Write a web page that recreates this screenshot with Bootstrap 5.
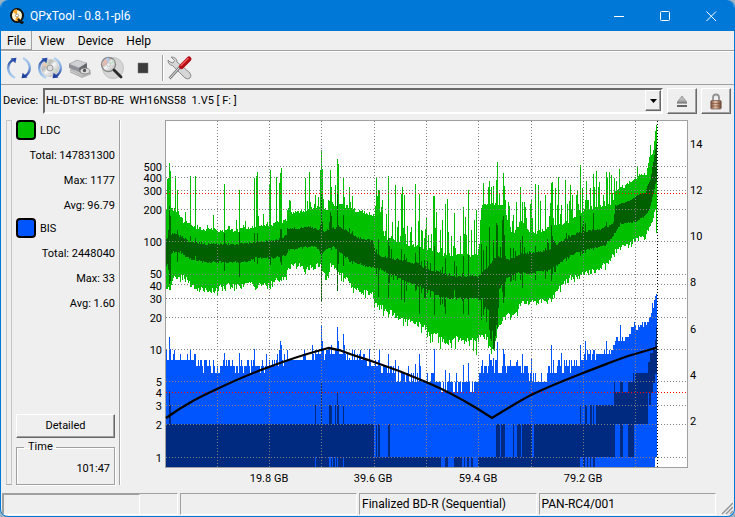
<!DOCTYPE html>
<html lang="en">
<head>
<meta charset="utf-8">
<meta name="viewport" content="width=device-width, initial-scale=1">
<title>QPxTool - 0.8.1-pl6</title>
<link href="https://cdn.jsdelivr.net/npm/bootstrap@5.3.0/dist/css/bootstrap.min.css" rel="stylesheet">
<style>
:root{--face:#efefef;--accent:#0078d7;--edge:#a0a0a0;--shade:#696969}
body{background:#9fb4c2;font:11px/14px Roboto,"Liberation Sans",sans-serif;color:#000}
.app-window{background:var(--face);border:1px solid var(--accent);border-top:0;border-radius:8px;overflow:hidden}
.title-strip{background:var(--accent);height:31px;color:#fff;font:12px/16px Roboto,"Open Sans",sans-serif}
.title-strip button{background:none;border:0;color:#fff;width:46px;height:31px;padding:0}
.menu-strip{height:20px;border-bottom:1px solid var(--edge);font:12px/16px Roboto,"Open Sans",sans-serif}
.menu-strip a{color:#000;text-decoration:none;padding:2px 6px 1px;margin-right:1px}
.menu-strip a.current{border-right:1px solid var(--edge);border-bottom:1px solid var(--edge);padding-right:5px}
.tool-strip{height:34px;padding-left:2px;border-top:1px solid #fff;border-bottom:1px solid var(--edge)}
.tool-strip button{background:none;border:0;padding:0;width:31px;height:30px}
.tool-sep{width:2px;height:26px;border-left:1px solid var(--edge);border-right:1px solid #fff}
.device-row{padding:3px 3px 1px 2px}
.device-row label{width:40px}
.pick{border:2px solid;border-color:var(--shade) #fff #fff var(--shade);height:26px}
.pick select{appearance:none;background:var(--face);border:0;border-radius:0;font:inherit;color:#000;padding:0 18px 0 1px;outline:0;white-space:pre}
.pick-arrow{right:0;top:0;width:16px;height:21px;pointer-events:none}
.raised{background:var(--face);border:1px solid;border-color:#fff var(--shade) var(--shade) #fff;box-shadow:inset -1px -1px 0 var(--edge);color:#000;padding:0}
.sq{width:30px;height:26px}
.handle{width:6px;border:1px solid #c6c6c6;border-bottom-color:#a8a8a8}
.side{width:103px}
.side-wrap{padding:5px 0 6px 5px}
.side-edge{width:2px;border-left:1px solid var(--edge);border-right:1px solid #fff}
.swatch{width:20px;height:20px;border:2px solid #000;border-radius:4px}
.swatch.ldc{background:#00c000}.swatch.bis{background:#0055ff}
.series-head{height:23px}
.stat{height:25px;line-height:25px;text-align:right}
.detail-btn{height:24px;margin-bottom:2px}
.time-box{border:1px solid var(--edge);box-shadow:1px 1px 0 #fff,inset 1px 1px 0 #fff;padding:0 4px 8px;min-width:0}
.time-box legend{float:none;width:auto;font:inherit;margin:0 0 0 3px;padding:0 3px 0 4px}
.plot text{font:11px Roboto,"Liberation Sans",sans-serif}
.status-strip{padding:2px 1px 1px;gap:2px;font:12px/20px Roboto,"Open Sans",sans-serif}
.pane{flex:1 1 0;height:22px;border:1px solid;border-color:var(--edge) #fff #fff var(--edge);padding-left:2px;white-space:nowrap;overflow:hidden}
.meter{width:79%;height:21px;border:1px solid;border-color:var(--edge) #fff #fff var(--edge)}
.grip{width:15px}
</style>
</head>
<body>
<div class="app-window min-vh-100 d-flex flex-column">
  <header class="title-strip d-flex align-items-center ps-2">
    <svg width="17" height="18" viewBox="0 0 17 18" class="me-1" aria-hidden="true"><ellipse cx="8" cy="8.500" rx="6" ry="6.500" fill="#fff4d0" stroke="#111" stroke-width="2"/><path d="M8 8L3.600 4.500Q5.500 2 8 2.300ZM8 9L12 13Q9 15 6 13.500Z" fill="#f7a325"/><circle cx="8" cy="8.500" r="1.500" fill="#fff" stroke="#777" stroke-width=".7"/><path d="M9 12l3.500 4 2-1" fill="none" stroke="#111" stroke-width="2"/></svg>
    <span class="flex-grow-1">QPxTool - 0.8.1-pl6</span>
    <button aria-label="Minimize"><svg width="11" height="11"><path d="M0 5.500h10" stroke="#fff"/></svg></button>
    <button aria-label="Maximize"><svg width="11" height="11"><rect x=".5" y=".5" width="9" height="9" rx="1" fill="none" stroke="#fff"/></svg></button>
    <button aria-label="Close"><svg width="11" height="11"><path d="M.5.500l9.500 9.500M10 .500L.5 10" stroke="#fff"/></svg></button>
  </header>
  <nav class="menu-strip d-flex"><a href="#" class="current">File</a><a href="#">View</a><a href="#">Device</a><a href="#">Help</a></nav>
  <div class="tool-strip d-flex align-items-center" role="toolbar">
    <svg width="0" height="0" class="position-absolute" aria-hidden="true"><defs>
      <linearGradient id="arc" x2="0" y2="1"><stop stop-color="#b5d2f0"/><stop offset=".5" stop-color="#7fa8dd"/><stop offset="1" stop-color="#1f3f9c"/></linearGradient>
      <linearGradient id="arc2" x2="0" y2="1"><stop stop-color="#1f3f9c"/><stop offset=".5" stop-color="#7fa8dd"/><stop offset="1" stop-color="#b5d2f0"/></linearGradient>
      <linearGradient id="disc" x2="1" y2="1"><stop stop-color="#eee"/><stop offset=".35" stop-color="#bbb"/><stop offset=".5" stop-color="#f6f6f6"/><stop offset="1" stop-color="#aaa"/></linearGradient>
      <linearGradient id="brass" x2="1"><stop stop-color="#7c4a34"/><stop offset=".45" stop-color="#e6c3ab"/><stop offset="1" stop-color="#6b3d2a"/></linearGradient>
      <g id="spin"><path d="M6.500 3.500C-1 8 -.5 17.500 8 22" fill="none" stroke="url(#arc2)" stroke-width="2.400"/><path d="M17.500 20.500C25 16 24.500 6.500 16 2" fill="none" stroke="url(#arc)" stroke-width="2.400"/><path d="M3.500 2.500l6-.8-1.200 5.500z" fill="#274ba8"/><path d="M20.500 21.500l-6 .8 1.200-5.500z" fill="#1f3f9c"/></g>
    </defs></svg>
    <button aria-label="Rescan bus"><svg width="24" height="24"><use href="#spin"/></svg></button>
    <button aria-label="Reload media"><svg width="24" height="24"><circle cx="12" cy="12" r="8.500" fill="url(#disc)" stroke="#bbb" stroke-width=".6"/><path d="M12 12L6 6l3-2zM12 12l7 2-1 3z" fill="#c7dcc3"/><path d="M12 12L5 9l1-3z" fill="#f1c5aa"/><circle cx="12" cy="12" r="3" fill="#ddd" stroke="#999"/><use href="#spin"/></svg></button>
    <button aria-label="Device info"><svg width="25" height="24"><path d="M2 14l13 6 8-3-12-6z" fill="#c4c4c4" stroke="#999" stroke-width=".6"/><path d="M1 8l8-4 9 4v7l-4 2-13-5z" fill="#909096"/><path d="M1 8l8-4 10 3-8 5z" fill="#cfd1d5" stroke="#999" stroke-width=".5"/><path d="M11 12l8-5v6l-7 4z" fill="#66676c"/><ellipse cx="17" cy="15" rx="5" ry="3" fill="#ddd" stroke="#777" stroke-width=".8"/><circle cx="16.500" cy="14.500" r="1.700" fill="#555"/><path d="M2 15l12 5 9-3v1.500l-9 3.500-12-5.500z" fill="#b4b4b4"/></svg></button>
    <button aria-label="Scan"><svg width="26" height="24"><circle cx="14" cy="12" r="10.500" fill="#d6d6d6" stroke="#c0c0c0"/><circle cx="9.500" cy="8.500" r="7" fill="url(#disc)" stroke="#8a8a8a" stroke-width="1.400"/><path d="M9.500 8.500L4.500 5l3-2zM9.500 8.500l-6 1V6z" fill="#f0b7a8"/><path d="M9.500 8.500l5-5 1 3z" fill="#bfe0c8"/><path d="M9.500 8.500l-3-6 3-1z" fill="#b7c8ee"/><circle cx="9.500" cy="8.500" r="2" fill="#eee" stroke="#aaa" stroke-width=".6"/><path d="M15 14l7 7" stroke="#2a2a2a" stroke-width="2.800" stroke-linecap="round"/></svg></button>
    <button aria-label="Stop"><svg width="24" height="24"><rect x="7" y="7" width="10" height="10" fill="#3c3c3c" stroke="#777" stroke-width=".5"/></svg></button>
    <span class="tool-sep ms-1"></span>
    <button aria-label="Preferences"><svg width="26" height="26"><path d="M4 2l3.500 3.500L6 8 3 7 1 5Q1 10 5.500 10.500L18 23q3 2 5 0t0-5L10 7Q10 2 4 2" fill="#d6d6d6" stroke="#858585" stroke-width=".9"/><path d="M2.500 23.500l11-12" stroke="#777" stroke-width="2.600"/><path d="M2.500 23.500l10-11" stroke="#eee"/><path d="M14.500 11.500l7.500-7.500" stroke="#b30d18" stroke-width="5" stroke-linecap="round"/><path d="M14 10.500l7-7" stroke="#f15a5a" stroke-width="1.500" stroke-linecap="round"/></svg></button>
  </div>
  <div class="device-row d-flex align-items-center">
    <label for="dev">Device:</label>
    <div class="pick position-relative flex-grow-1 me-1">
      <select id="dev" class="w-100 h-100"><option>HL-DT-ST BD-RE&nbsp; WH16NS58&nbsp; 1.V5 [ F: ]</option></select>
      <span class="pick-arrow raised position-absolute d-flex align-items-center justify-content-center"><svg width="7" height="4"><path d="M0 0h7L3.500 4z"/></svg></span>
    </div>
    <button class="raised sq me-1" aria-label="Eject"><svg width="12" height="14"><path d="M6 2l4 5H2z" fill="#bbb" stroke="#888" stroke-width=".7"/><path d="M1 8.500h10M1 12h10" stroke="#666" stroke-width="2"/><path d="M1 8h10" stroke="#aaa" stroke-width=".8"/></svg></button>
    <button class="raised sq" aria-label="Lock"><svg width="12" height="17"><path d="M3 9V4.500Q3 1.500 6 1.500T9 4.500V9" fill="none" stroke="#929292" stroke-width="1.800"/><rect x=".8" y="7.500" width="10.400" height="8.500" rx="1" fill="url(#brass)" stroke="#7a675e" stroke-width=".8"/><path d="M1 10.500h10M1 13h10" stroke="#7a4630" stroke-width=".6"/></svg></button>
  </div>
  <main class="d-flex flex-grow-1">
    <div class="side-wrap d-flex flex-shrink-0">
      <span class="handle"></span>
      <section class="side d-flex flex-column ps-1">
        <div class="series-head d-flex"><span class="swatch ldc me-1"></span><span class="pt-1">LDC</span></div>
        <div class="stat">Total: 147831300</div><div class="stat">Max: 1177</div><div class="stat">Avg: 96.79</div>
        <div class="series-head d-flex"><span class="swatch bis me-1"></span><span class="pt-1">BIS</span></div>
        <div class="stat">Total: 2448040</div><div class="stat">Max: 33</div><div class="stat">Avg: 1.60</div>
        <button class="raised detail-btn mt-auto">Detailed</button>
        <fieldset class="time-box"><legend>Time</legend><div class="text-end pt-2">101:47</div></fieldset>
      </section>
      <span class="side-edge ms-1"></span>
    </div>
    <div class="flex-grow-1 d-flex">
      <svg class="plot w-100 h-100" viewBox="121 115 613 376" role="img" aria-label="Error rate and speed over disc position">
        <rect x="165" y="120" width="523" height="348" fill="#a0a0a0"/><rect x="166" y="121" width="521" height="346" fill="#fff"/>
        <g id="bars" shape-rendering="crispEdges"></g>
        <g id="grid" shape-rendering="crispEdges" fill="none"></g>
        <path d="M166 418C185 404 200 397 217 389C240 378 252 373 269 367C285 361 310 353 321 350L329 348L339 350C355 356 362 358 374 362C395 369 410 375 426 382C445 390 460 398 478 409L492 418L510 407C520 401 525 398 531 395C550 386 560 382 583 373C610 363 620 358 635 354L657 347.500" fill="none" stroke="#000" stroke-width="2.300"/>
        <g id="labels"></g>
      </svg>
    </div>
  </main>
  <footer class="status-strip d-flex">
    <div class="pane p-0"><div class="meter"></div></div>
    <div class="pane"></div>
    <div class="pane">Finalized BD-R (Sequential)</div>
    <div class="pane">PAN-RC4/001</div>
    <svg class="grip" viewBox="0 0 15 22"><path d="M4 21L15 10M8 21l7-7M12 21l3-3" stroke="#999" stroke-width="1.500"/></svg>
  </footer>
</div>
<script src="https://cdn.jsdelivr.net/npm/bootstrap@5.3.0/dist/js/bootstrap.bundle.min.js"></script>
<script>
const P = s => s.trim().split(/\s+/).map(t => t.split(',').map(Number));
const at = (c, x) => { for (let i = 1; i < c.length; i++) if (x <= c[i][0]) { const [a, b] = c[i-1], [d, e] = c[i]; return b + (e-b)*(x-a)/(d-a); } return c[c.length-1][1]; };
let seed = 7; const rnd = () => (seed = (seed*16807) % 2147483647) / 2147483647;

/* Envelopes of the LDC series: outer range and mean range. */
const top1 = P('166,208 172,209 179,215 183,222 195,229 215,231 228,232 238,231 247,229 262,227 272,225 286,221 287,213 305,212 315,209 321,206 327,213 329,203 333,206 345,207 352,209 357,212 374,216 376,200 379,205 381,225 385,239 392,241 400,244 410,245 426,250 440,255 455,256 470,257 477,257 480,238 483,206 490,205 500,205 505,212 510,230 515,236 520,220 525,229 533,234 548,229 560,225 570,222 580,216 585,210 605,207 612,205 615,191 622,189 630,182 640,176 646,174 649,158 653,153 654,140 656,127');
const bot1 = P('166,283 169,287 170,286 173,276 183,274 190,281 197,286 215,288 222,282 240,284 247,279 255,284 272,278 280,276 286,274 288,264 300,261 305,267 315,262 322,265 328,274 330,262 335,266 338,270 345,274 352,284 360,290 372,289 374,302 380,304 388,308 400,316 410,318 420,322 430,329 440,335 447,341 455,335 463,338 477,335 485,333 490,343 494,348 497,326 505,314 515,309 520,301 530,300 540,298 552,296 560,283 570,275 580,273 590,269 598,266 607,260 612,251 616,245 625,244 633,238 645,234 650,220 656,203');
const top2 = P('166,240 172,234 182,238 188,242 205,245 238,245 255,243 270,242 280,240 286,236 287,230 310,228 325,232 330,230 338,228 345,231 357,239 372,241 375,253 380,257 400,261 418,265 428,271 440,273 450,277 478,277 486,270 495,258 510,260 520,255 540,253 550,251 560,243 570,237 580,233 600,230 608,227 613,224 615,207 625,204 635,197 645,193 650,180 655,150 656,145');
const bot2 = P('166,265 172,251 180,251 187,257 203,261 248,261 255,257 275,257 286,254 288,249 315,245 322,252 330,245 335,247 350,260 365,265 373,266 380,268 392,274 405,280 418,285 430,290 440,296 450,297 480,298 481,309 488,308 489,335 494,346 497,312 499,288 505,278 515,272 530,272 545,270 555,265 565,258 575,252 590,248 605,244 612,236 620,223 635,221 645,215 650,205 656,180');
const spikes = new Map(P('167,179 168,178 169,163 170,171 175,176 177,190 185,212 190,176 195,176 213,215 224,184 239,190 245,221 254,178 256,176 257,172 263,214 269,184 270,170 276,177 279,183 280,173 281,168 284,220 305,178 309,172 315,195 320,170 321,150 322,169 328,200 330,170 331,187 335,185 337,159 338,164 343,178 344,197 349,187 352,196 376,178 379,190 382,200 388,176 392,222 395,185 401,194 402,187 404,195 410,232 415,184 419,194 426,217 428,235 433,196 434,196 436,212 440,230 445,204 447,199 454,213 460,236 463,207 465,217 468,190 471,230 474,220 476,210 481,208 482,205 488,187 489,181 491,187 493,186 497,162 496,180 503,173 504,186 509,206 513,215 516,202 520,187 522,202 525,207 530,204 531,200 535,184 538,185 540,201 545,195 551,183 552,182 555,188 558,177 561,205 565,180 570,185 577,190 580,165 582,188 585,200 590,188 593,174 596,171 598,187 606,172 607,177 609,172 611,175 614,178 619,169 622,185 637,167'));
const dark = new Map(P('168,230,270 169,206,285 170,216,281 177,230,262 190,236,258 195,238,256 224,233,271 239,232,277 254,233,262 257,233,264 270,241,265 280,229,262 281,229,265 320,225,254 321,193,301 322,222,254 329,222,248 330,212,248 331,216,250 337,194,291 338,225,264 343,215,266 349,228,262 352,231,264 376,249,276 378,239,297 388,238,298 401,249,300 404,254,302 419,247,314 434,246,315 445,258,314 454,261,290 463,256,314 468,255,315 481,244,320 483,250,315 486,246,322 489,227,330 493,240,350 496,223,325 497,225,328 502,220,292 503,216,303 504,235,297 510,248,282 520,240,280 522,236,288 551,225,281 552,236,274 580,216,256 582,226,254 593,213,250 606,222,244').map(a => [a[0], a]));
let out = '';
const bar = (x, a, b, c, w = 1) => { if (b > a) out += `<rect x="${x}" y="${Math.round(a)}" width="${w}" height="${Math.round(b)-Math.round(a)}" fill="${c}"/>`; };
for (let x = 166; x < 657; x++) {
  const busy = x > 380 && x < 600;
  let a = at(top1, x) - rnd()*4 + 1, b = at(bot1, x) + rnd()*6;
  if (rnd() < .12) a -= rnd()*12;
  if (busy && rnd() < .25) a -= rnd()*26;
  if (rnd() < .12) b += 5;
  if (x > 400 && x < 490 && rnd() < .12) b += 9;
  if (spikes.has(x)) a = spikes.get(x);
  let c = at(top2, x) - rnd()*2, d = at(bot2, x) + rnd()*2;
  if (busy && rnd() < .15) { c -= rnd()*11; d += rnd()*10; }
  if (x > 480 && x < 494 && rnd() < .4) d -= 12;
  if (dark.has(x)) [, c, d] = dark.get(x);
  if (x === 656) b = 233;
  bar(x, a, Math.max(b, d), '#00c000'); bar(x, c, d, '#006000');
}

/* BIS counts are whole numbers on a log scale. */
const Y = v => 457.5 - 108*Math.log10(v);
const bis = P('166,8.4 180,8.2 190,7.8 197,7.2 205,6.6 225,6.7 240,6.6 262,6.8 272,7.4 290,8 305,8.2 320,9 326,8.5 338,9.4 350,8.6 360,8 372,7.2 385,6.4 395,5.6 420,5.2 430,4.9 445,4.6 475,4.8 482,6.3 500,6.6 510,7 520,6.9 525,5.8 533,5 544,5.2 548,6 560,6.4 575,7 582,8 595,8.8 610,9 615,11.5 628,13 632,15.5 640,15.5 646,17 650,20 653,24 655,31 656,33');
const bisUp = new Map(P('169,337 170,349 190,349 224,353 239,353 254,349 279,350 280,341 281,345 312,345 321,325 322,341 329,349 331,345 337,327 338,341 343,334 349,358 369,349 379,350 388,354 395,360 415,364 419,354 434,349 445,370 463,365 468,363 481,366 489,354 493,358 497,342 503,349 504,354 516,362 522,354 531,359 551,345 561,353 580,345 585,341 593,350 606,341 620,325 634,322 652,303'));
for (let x = 166; x < 657; x++) {
  const v = Math.round(at(bis, x) + (rnd() < .25 ? 1.2 : 0) + (rnd() - .5)*.9);
  bar(x, bisUp.has(x) ? bisUp.get(x) : Y(v), x > 654 ? 457 : 467, '#0055ff');
}
const N = '#002a80';
P(`166,424,208,43 374,457,67,10 376,424,1,33 378,424,2,33 388,424,2,33 445,457,3,10 454,457,8,10 464,457,1,10 467,457,2,10 471,457,2,10 478,457,102,10
496,424,4,33 501,424,4,33 513,424,1,33 517,424,4,33 522,424,10,33 534,424,81,33 620,424,3,33 628,424,6,33 583,457,2,10 587,457,1,10 590,457,1,10 593,457,2,10
580,405,1,19 585,405,1,19 586,405,1,19 590,405,2,19 593,405,1,19 596,405,51,19 614,392,33,14 614,382,1,11 620,382,3,11 628,382,7,11 633,373,1,10 635,373,17,20 647,393,1,31 648,362,5,30 649,392,2,13 650,353,5,30 653,347,3,26 655,340,2,34 656,327,1,30
169,391,1,33 170,405,1,19 315,405,1,19 321,383,1,41 329,405,3,19 335,405,1,19 337,393,1,31 338,405,1,19 343,405,1,19`).forEach(r => bar(r[0], r[1], r[1]+r[3], N, r[2]));
P('315,1 329,2 332,1 335,1 337,1 343,1').forEach(r => bar(r[0], 457, 467, '#0055ff', r[1]));
document.getElementById('bars').innerHTML = out;

let g = '';
const line = (d, c) => g += `<path d="${d}" stroke="${c}" stroke-dasharray="1 2"/>`;
[217,269,321,374,426,478,531,583,635].forEach(x => line(`M${x}.5 121V467`, '#808080'));
[166,177,190,209,241,274,284,298,317,349,381,405,424,457].forEach(y => line(`M166 ${y}.5H687`, '#808080'));
[193,392].forEach(y => line(`M166 ${y}.5H687`, '#f00'));
line('M657.5 121V467', '#000');
document.getElementById('grid').innerHTML = g;

let t = '';
const label = (x, y, s, a) => t += `<text x="${x}" y="${y}" text-anchor="${a}">${s}</text>`;
[[500,171],[400,182],[300,195],[200,214],[100,246],[50,278],[40,290],[30,303],[20,322],[10,354],[5,386],[4,397],[3,410],[2,429],[1,462]].forEach(r => label(162, r[1], r[0], 'end'));
[[14,148],[12,194],[10,240],[8,286],[6,333],[4,379],[2,425]].forEach(r => label(690, r[1], r[0], 'start'));
[[19.8,269],[39.6,373],[59.4,478],[79.2,583]].forEach(r => label(r[1], 482, r[0] + ' GB', 'middle'));
document.getElementById('labels').innerHTML = t;
</script>
</body>
</html>
